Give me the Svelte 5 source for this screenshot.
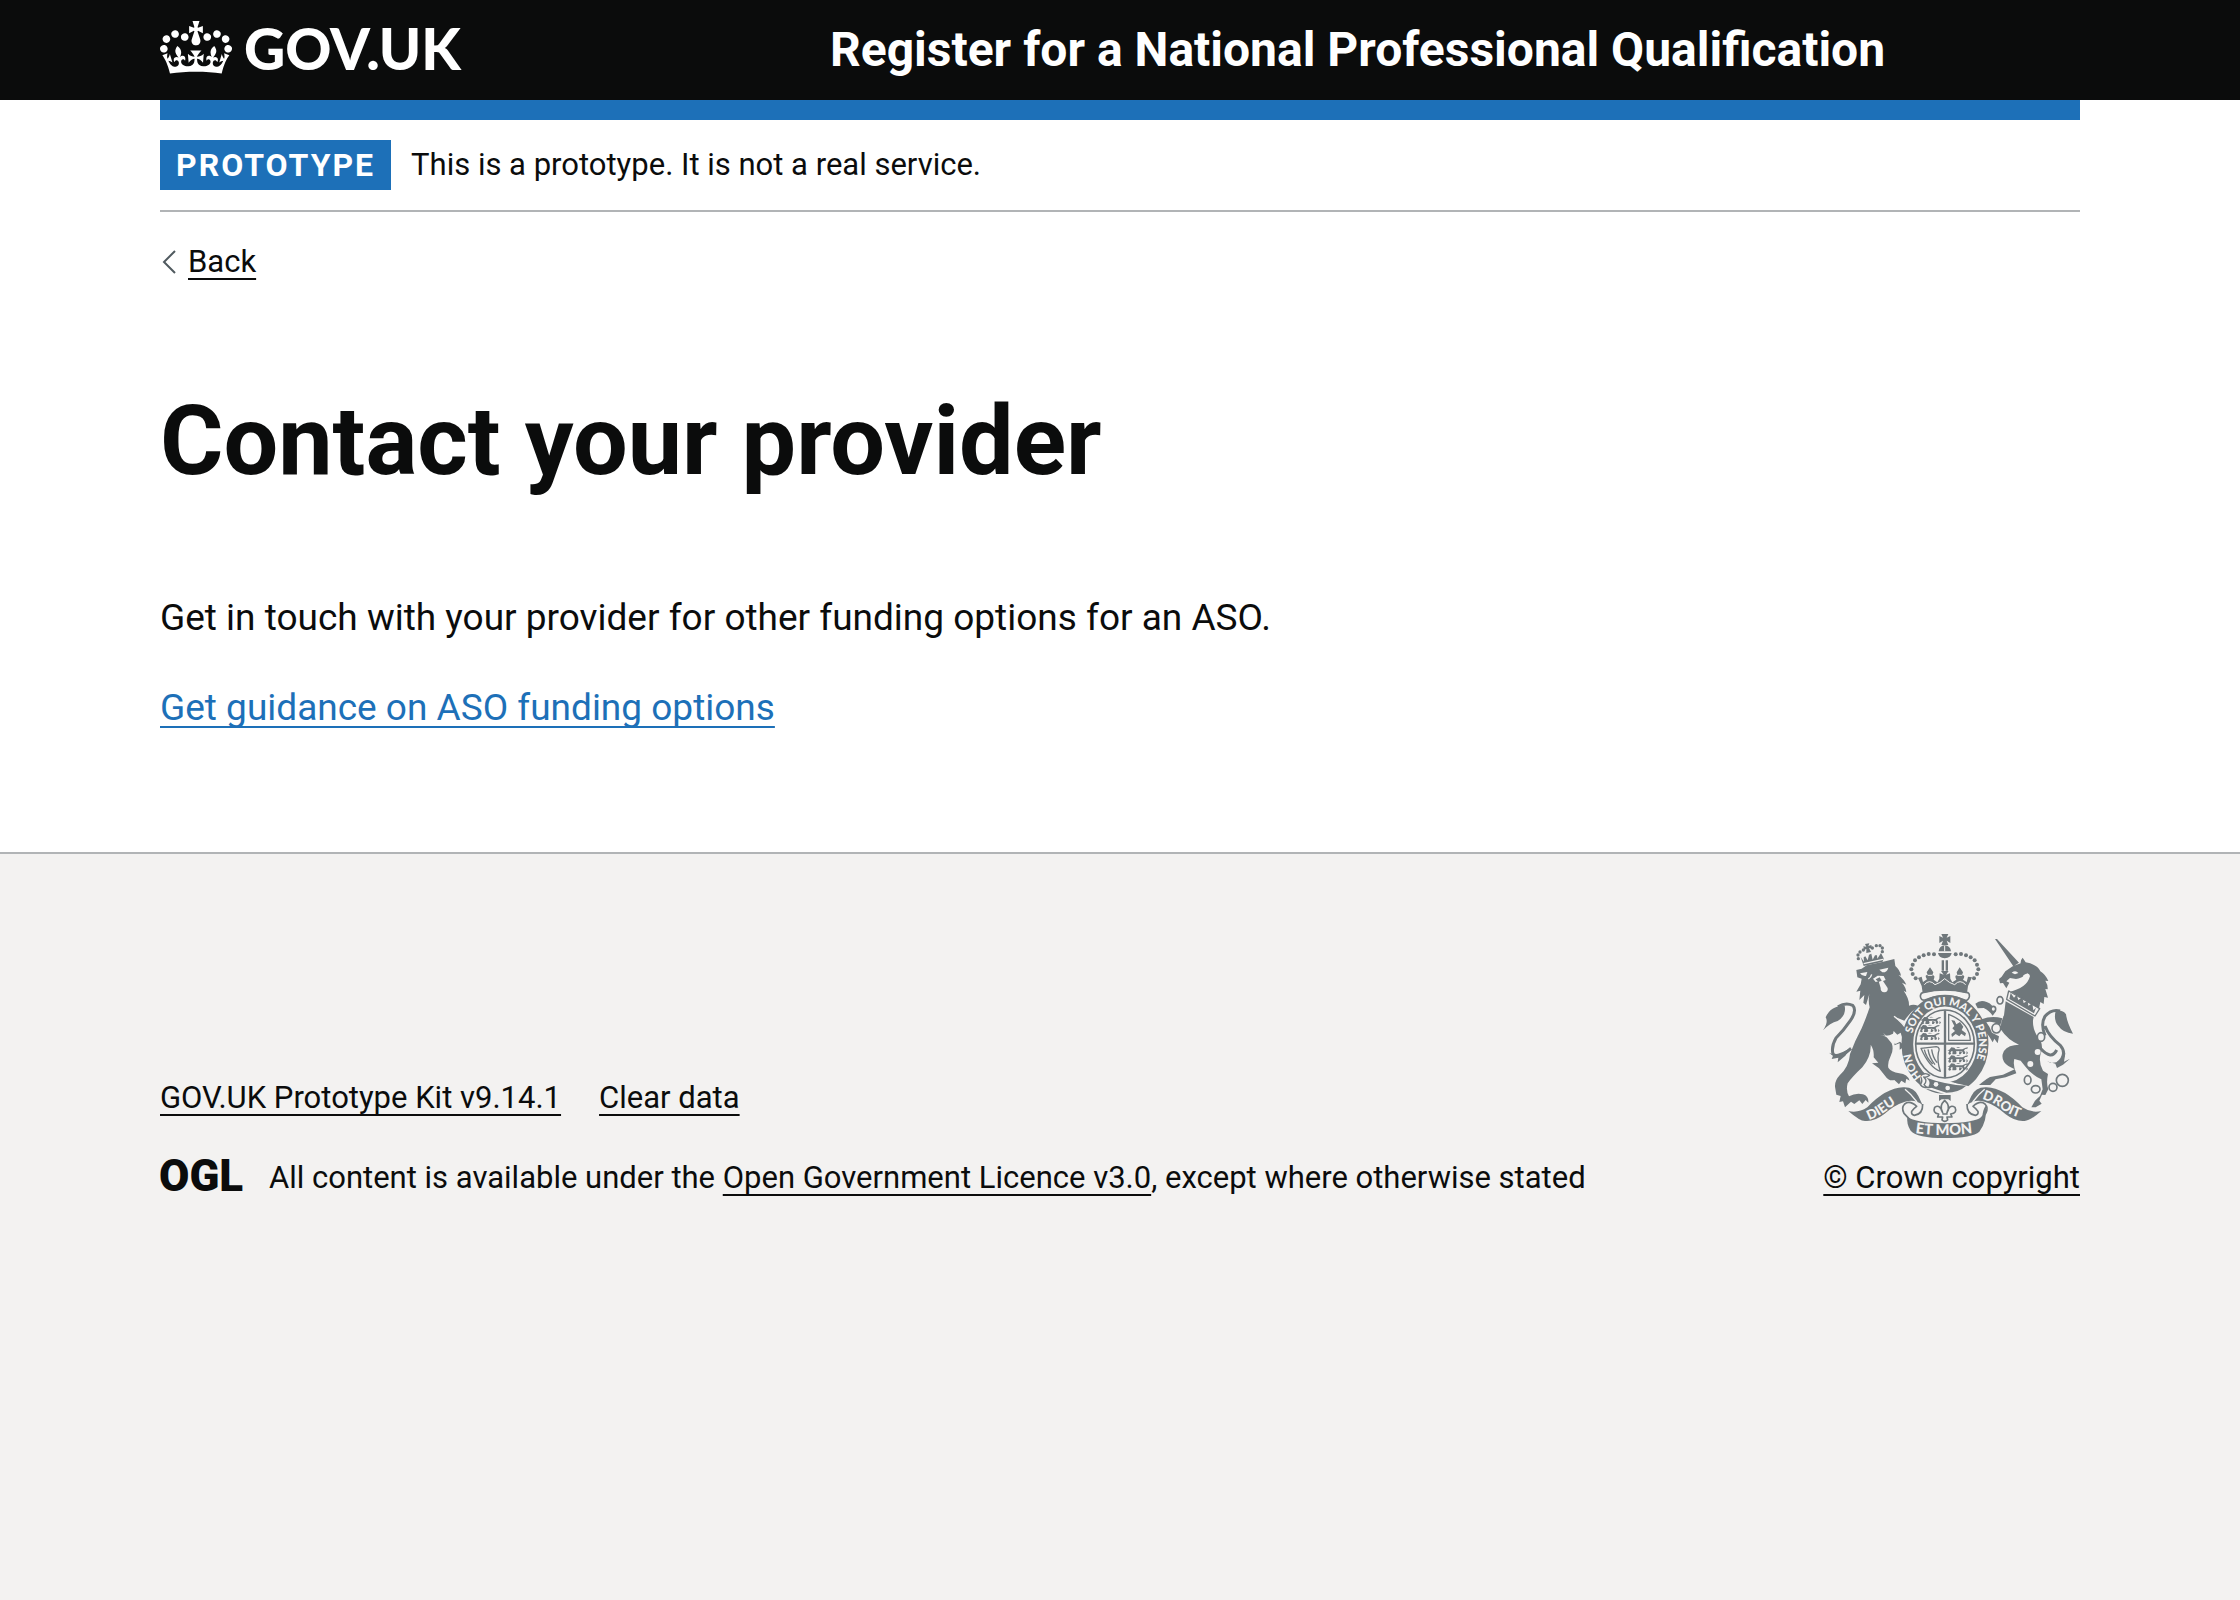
<script>
  const crownPearls = [
    [405, 103], [389, 102], [374, 106], [360, 112], [348, 121], [341, 134], [337, 148], [341, 162], [350, 175]
  ];
  const smallPearls = [
    [178, 116], [177, 105], [183, 96], [193, 90], [220, 84], [232, 77], [243, 77], [250, 84], [250, 95]
  ];
  const rings = [
    [603, 241, 9, 11], [583, 267, 7, 8], [592, 325, 13, 14], [726, 351, 11, 13], [686, 480, 10, 13],
    [710, 508, 13, 11], [762, 502, 12, 12], [790, 481, 18, 18]
  ];
  const passant = [
    [366, 290], [362, 314], [362, 338], [447, 381], [447, 405], [447, 429]
  ];
</script>

<header class="header">
  <div class="container header-row">
    <a class="logo" href="#home" aria-label="GOV.UK">
      <svg class="crown" viewBox="0 0 132 97" aria-hidden="true">
        <path fill="currentColor" fill-rule="evenodd" d="M25 30.2c3.5 1.5 7.7-.2 9.1-3.7 1.5-3.6-.2-7.8-3.9-9.2-3.6-1.4-7.6.3-9.1 3.9-1.4 3.5.3 7.5 3.9 9zM9 39.5c3.6 1.5 7.8-.2 9.2-3.7 1.5-3.6-.2-7.8-3.9-9.1-3.6-1.5-7.6.2-9.1 3.8-1.4 3.5.3 7.5 3.8 9zM4.4 57.2c3.5 1.5 7.7-.2 9.1-3.8 1.5-3.6-.2-7.7-3.9-9.1-3.5-1.5-7.6.3-9.1 3.8-1.4 3.5.3 7.6 3.9 9.1zm38.3-21.4c3.5 1.5 7.7-.2 9.1-3.8 1.5-3.6-.2-7.7-3.9-9.1-3.6-1.5-7.6.3-9.1 3.8-1.3 3.6.4 7.7 3.9 9.1zm64.4-5.6c-3.6 1.5-7.8-.2-9.1-3.7-1.5-3.6.2-7.8 3.8-9.2 3.6-1.4 7.7.3 9.2 3.9 1.3 3.5-.4 7.5-3.9 9zm15.9 9.3c-3.6 1.5-7.7-.2-9.1-3.7-1.5-3.6.2-7.8 3.7-9.1 3.6-1.5 7.7.2 9.2 3.8 1.5 3.5-.3 7.5-3.8 9zm4.7 17.7c-3.6 1.5-7.8-.2-9.2-3.8-1.5-3.6.2-7.7 3.9-9.1 3.6-1.5 7.7.3 9.2 3.8 1.3 3.5-.4 7.6-3.9 9.1zM89.3 35.8c-3.6 1.5-7.8-.2-9.2-3.8-1.4-3.6.2-7.7 3.9-9.1 3.6-1.5 7.7.3 9.2 3.8 1.4 3.6-.3 7.7-3.9 9.1zM69.7 17.7l8.9 4.7V9.3l-8.9 2.8c-.2-.3-.5-.6-.9-.9L72.4 0H59.6l3.5 11.2c-.3.3-.6.5-.9.9l-8.8-2.8v13.1l8.8-4.7c.3.3.6.7.9.9l-5 15.4v.1c-.2.8-.4 1.6-.4 2.4 0 4.1 3.1 7.5 7 8.1h.2c.3 0 .7.1 1 .1.4 0 .7 0 1-.1h.2c4-.6 7.1-4.1 7.1-8.1 0-.8-.1-1.7-.4-2.4V34l-5.1-15.4c.4-.2.7-.6 1-.9zM66 92.8c16.9 0 32.8 1.1 47.1 3.2 4-16.9 8.9-26.7 14-33.5l-9.6-3.4c1 4.9 1.1 7.2 0 10.2-1.5-1.4-3-4.3-4.2-8.7L108.6 76c2.8-2 5-3.2 7.5-3.3-4.4 9.4-10 11.9-13.6 11.2-4.3-.8-6.3-4.6-5.6-7.9 1-4.7 5.7-5.9 8-.5 4.3-8.7-3-11.4-7.6-8.8 7.1-7.2 7.9-13.5 2.1-21.1-8 6.1-8.1 12.3-4.5 20.8-4.7-5.4-12.1-2.5-9.5 6.2 3.4-5.2 7.9-2 7.2 3.1-.6 4.3-6.4 7.8-13.5 7.2-10.3-.9-10.9-8-11.2-13.8 2.5-.5 7.1 1.8 11 7.3L80.2 60c-4.1 4.4-8 5.3-12.3 5.4 1.4-4.4 8-11.6 8-11.6H55.5s6.4 7.2 7.9 11.6c-4.2-.1-8-1-12.3-5.4l1.4 16.4c3.9-5.5 8.5-7.7 10.9-7.3-.3 5.8-.9 12.8-11.1 13.8-7.2.6-12.9-2.9-13.5-7.2-.7-5 3.8-8.3 7.1-3.1 2.7-8.7-4.6-11.6-9.4-6.2 3.7-8.5 3.6-14.7-4.6-20.8-5.8 7.6-5 13.9 2.2 21.1-4.7-2.6-11.9.1-7.7 8.8 2.3-5.5 7.1-4.2 8.1.5.7 3.3-1.3 7.1-5.7 7.9-3.5.7-9-1.8-13.5-11.2 2.5.1 4.7 1.3 7.5 3.3l-4.7-15.4c-1.2 4.4-2.7 7.2-4.3 8.7-1.1-3-.9-5.3 0-10.2l-9.5 3.4c5 6.9 9.9 16.7 14 33.5 14.8-2.1 30.8-3.2 47.7-3.2z" />
      </svg>
      <span>GOV.UK</span>
    </a>
    <a class="service" href="#service">Register for a National Professional Qualification</a>
  </div>
</header>

<div class="container">
  <div class="bar"></div>
  <div class="phase">
    <strong class="tag">PROTOTYPE</strong>
    <span>This is a prototype. It is not a real service.</span>
  </div>
  <nav class="back-row" aria-label="Back">
    <svg class="chevron" viewBox="0 0 16 24" aria-hidden="true"><path d="M15 1 4 12l11 11" fill="none" stroke="#505a5f" stroke-width="2" /></svg>
    <a class="link" href="#back">Back</a>
  </nav>
  <main>
    <h1>Contact your provider</h1>
    <p>Get in touch with your provider for other funding options for an ASO.</p>
    <p><a class="link blue" href="#guidance">Get guidance on ASO funding options</a></p>
  </main>
</div>

<footer>
  <div class="container footer-row">
    <div class="footer-main">
      <nav class="footer-links" aria-label="Support links">
        <a class="link" href="#kit">GOV.UK Prototype Kit v9.14.1</a>
        <a class="link" href="#clear">Clear data</a>
      </nav>
      <div class="licence">
        <svg class="ogl" viewBox="0 0 82 40" role="img" aria-label="Open Government Licence">
          <text x="-1" y="33" class="ogl-text">OGL</text>
        </svg>
        <span>All content is available under the <a class="link" href="#licence">Open Government Licence v3.0</a>, except where otherwise stated</span>
      </div>
    </div>
    <div class="copyright">
      <svg class="arms" viewBox="72 42 750 612" aria-hidden="true">
        <defs>
          <path id="garter" d="M368 470A102 118 0 0 1 336 373A102 118 0 0 1 438 255A102 118 0 0 1 540 373A102 118 0 0 1 438 491" />
          <path id="dieu" d="M210 600Q240 590 268 568Q290 549 335 536" />
          <path id="droit" d="M549 537Q582 546 605 565Q635 590 700 603" />
          <path id="mon" d="M349 639Q437 652 540 636" />
          <g id="lion-passant">
            <path d="M4 8l6-7 9 1 4 5h20l10-5 7-1-2 4-6 1-4 4 4 7-2 4h-5l-1-7-8-2-12 1 2 6-3 3h-5l1-7-8-3-5 7-5-1 3-6-6-2zM14 13l8 3-4 6h-5zM34 12l8 4-4 6h-5z" />
            <path d="M6 16l-6 4 5 3 5-3M56 12l4 6-5 5M24 3l6-3 8 2" />
          </g>
          <g id="ribbon">
            <path d="M148 573Q178 580 205 562Q260 504 312 502Q345 500 358 528L371 556Q350 536 318 545Q285 555 255 583Q225 606 198 603Q182 603 148 573Z" />
            <path class="line" d="M371 552Q372 583 346 586Q336 584 338 574Q343 566 353 559Q332 540 317 552Q306 563 315 580L332 598" />
            <path class="cutline" d="M318 508Q336 522 354 546" />
          </g>
        </defs>
        <g class="ink">
          <!-- lion -->
          <path d="M172 150L188 146L203 136Q245 128 286 117L289 138Q303 150 306 167L299 165Q316 180 322 194L309 188Q321 202 322 217L314 212Q331 236 330 257Q344 251 358 258Q334 276 316 302L287 290Q324 318 337 350Q349 370 345 396L338 400L331 387L324 402L313 382L302 389L302 370L286 376L290 358L267 352L252 338L278 370Q285 388 275 408Q265 428 268 443Q276 456 301 460Q326 463 332 482L322 476L319 490L307 482L300 493L286 480Q270 485 258 467L240 445L219 430L238 428L224 412Q226 390 215 374Q217 410 190 442Q160 470 146 490Q140 512 150 529Q170 518 192 523Q210 529 208 548L200 540L190 552L181 541L166 552L156 545L138 562L132 544L121 546L125 528L112 524L108 500Q107 482 122 466Q150 440 153 402Q169 360 188 325Q202 292 212 262Q207 242 211 222L201 255L193 248L196 225L181 240L184 212L172 215L185 193L188 176L175 172Z" />
          <path d="M242 344Q264 352 282 341L284 333L295 344L305 338L309 352L319 350L320 366L332 368L320 380L303 365L290 372Q275 352 242 344Z" class="paper" />
          <path class="paper" d="M183 160L205 156L201 168Q190 170 183 160ZM241 149L268 143Q264 158 250 157ZM222 176L236 167L254 168L260 180L252 183L266 204Q268 216 256 217Q244 216 245 204L239 184L230 186Z" />
          <path d="M230 178L242 172L248 182L238 186Z" />
          <path class="cutline" d="M285 289Q312 309 326 334M208 177Q216 172 218 163" />
          <path class="line tail" d="M156 385Q120 418 102 402Q96 380 111 354Q135 330 154 302Q175 272 161 256Q140 246 117 260" />
          <path d="M72 331Q89 306 80 292Q95 256 137 257Q143 286 116 303Q93 309 72 331ZM90 398Q112 412 157 382L139 407L116 427L118 413L98 417L102 407Z" />
          <!-- lion's crown -->
          {#each smallPearls as [x, y]}<circle cx={x} cy={y} r="5" />{/each}
          <path d="M198 72L211 70L208 78L217 75L219 86L210 84L216 96L202 99L202 87L195 90L193 79L202 80ZM185 111L195 125L194 112L199 109L206 121L210 104L217 101L221 119L228 106L234 106L235 116L246 99L254 115L251 125L194 138Z" />
          <path class="cutline" d="M194 131L252 118" />
          <!-- imperial crown -->
          <path d="M427 42H448L443 53L454 48V69L443 62L448 75H427L432 62L421 69V48L432 53Z" />
          <path d="M419 94Q421 77 437 76Q454 77 456 94ZM417 99H458Q456 113 437 115Q419 113 417 99ZM428 121H435V152H428ZM440 121H447V152H440Z" />
          <path class="cutline thin" d="M437 77V94" />
          {#each crownPearls as [x, y]}
            <circle cx={x} cy={y} r="6" />
            <circle cx={875 - x} cy={y} r="6" />
          {/each}
          <path d="M357 174L368 170L372 186L384 178Q375 164 386 165L383 157L393 142L403 157L400 166Q410 165 404 179L415 187L421 176L422 160L434 164L426 153H449L441 164L453 160L454 176L460 187L472 179Q465 165 475 166L473 157L482 142L492 157L489 166Q501 165 492 179L503 186L507 170L519 172L507 198L504 219Q437 202 371 219L368 198Z" />
          <path class="cutline thin" d="M376 194Q391 176 408 194Q423 190 437 176Q452 190 467 194Q483 176 500 194M386 166H400M475 166H489" />
          <path class="line" d="M374 217Q437 203 501 217Q513 217 511 230Q507 244 497 240Q437 215 378 240Q365 242 364 228Q365 218 374 217Z" />
          <!-- garter and shield -->
          <ellipse class="band" cx="438" cy="373" rx="113" ry="131" />
          <ellipse class="line shield" cx="438" cy="372" rx="88" ry="102" />
          <path class="line cross" d="M438 271V474M350 371H526" />
          {#each passant as [x, y]}<use href="#lion-passant" x={x} y={y} />{/each}
          <path class="line thin" d="M449 283V361H514Q512 308 449 283Z" />
          <path d="M457 300L467 302L472 313L483 306L493 320L488 330L501 340L498 349L487 341L481 349L470 342L459 351L457 342L468 333L460 325L466 318Z" />
          <path class="line thin" d="M366 385L412 380Q425 382 418 398Q414 425 424 454Q391 443 366 385ZM376 389Q382 414 401 432M387 388Q391 413 408 434M398 388Q401 411 414 428" />
          <path class="paper" d="M362 470Q380 454 393 470L510 499Q485 521 443 524L389 508Q370 508 366 493Z" />
          <path d="M382 473Q440 494 502 497Q479 518 442 518L388 500Q398 486 382 473ZM465 488Q489 470 504 467L520 484Q500 496 465 488Z" />
          <path class="line thin" d="M364 468Q378 455 392 466Q383 474 374 471Q387 482 375 494Q385 508 399 500M364 468Q373 482 364 494Q372 506 389 502" />
          <circle class="paper" cx="411" cy="493" r="7" />
          <circle class="paper" cx="446" cy="504" r="7" />
          <!-- unicorn -->
          <path d="M588 57H594L660 128L643 139ZM641 139L665 130Q664 120 671 113L680 127Q715 133 724 154Q739 163 748 183L739 182Q747 195 746 208L739 207L747 233L736 231L734 252L724 246L720 266L630 212Q653 204 668 188Q686 174 686 160Q665 177 651 177L633 174L622 184L631 188L622 205L612 189L603 190L600 177L608 170L619 154Z" />
          <path class="paper" d="M638 158Q650 149 658 159L648 163ZM628 216Q684 205 693 168Q690 154 673 166Q675 188 642 199Z" />
          <path class="line thin paper" d="M629 213L623 238L708 288L722 266Z" />
          <path d="M631 237L635 219L645 233L653 224L658 240L670 232L674 249L686 242L688 257L700 250L703 271L711 263L705 280Z" />
          <path d="M620 244L704 291Q697 316 713 346Q738 372 724 405Q719 430 732 452L747 462Q741 490 748 508L739 525L729 524L721 542L728 551L710 562H697L708 542L723 528L731 508L727 478Q695 462 677 437L665 422L646 417Q641 437 652 460L620 472L590 478L574 495H540L548 488L563 477L573 471L612 464L647 448L628 438Q607 424 611 403Q617 380 646 376L660 374Q627 361 605 328Q604 306 615 286Z" />
          <path d="M529 251Q544 238 563 246Q581 252 590 275L581 287Q569 270 554 264L536 265ZM548 298Q578 286 610 295L604 315Q578 302 562 307Q573 321 579 338L600 349L596 370L586 356L581 367L571 350L550 322L538 319L544 306L534 309Z" />
          <path class="line tail" d="M724 385Q758 422 773 390M738 347Q724 311 738 289Q758 266 783 273M738 318Q750 350 784 376Q807 404 776 430" />
          <path d="M770 273Q790 268 801 283Q804 307 822 341Q792 338 778 318Q763 300 770 273ZM744 424Q776 440 799 400L795 425L813 416L792 434L774 444L769 431Z" />
          {#each rings as [x, y, rx, ry]}<ellipse class="line ring" cx={x} cy={y} rx={rx} ry={ry} />{/each}
          <circle class="paper" cx="716" cy="396" r="9" />
          <circle class="paper" cx="694" cy="432" r="9" />
          <!-- ribbons and fleur-de-lis -->
          <use href="#ribbon" />
          <use href="#ribbon" transform="matrix(-1 0 0 1 875 0)" />
          <path d="M325 591Q350 608 437 610Q525 608 550 591Q551 570 561 556Q565 605 541 635Q520 654 437 654Q354 654 335 632Q322 612 325 591Z" />
          <path d="M420 525H455V543L448 538H428L420 543Z" />
          <path class="line" d="M437 541Q419 558 431 578Q423 551 407 562Q400 579 419 582L416 591H431L429 600Q437 608 446 600L444 591H459L455 582Q476 579 468 562Q451 551 444 578Q456 558 437 541ZM430 582H446" />
        </g>
        <g class="motto">
          <text><textPath href="#garter" startOffset="0">HON</textPath></text>
          <text><textPath href="#garter" startOffset="137">SOIT QUI MAL Y PENSE</textPath></text>
          <text class="wide"><textPath href="#dieu">DIEU</textPath></text>
          <text class="large"><textPath href="#mon">ET MON</textPath></text>
          <text class="wide"><textPath href="#droit">DROIT</textPath></text>
        </g>
      </svg>
      <a class="link" href="#copyright">© Crown copyright</a>
    </div>
  </div>
</footer>

<style>
  :global(html) { background: #f3f2f1; }
  :global(body) { margin: 0; background: #fff; }
  .header { background: #0b0c0c; color: #fff; }
  .container {
    max-width: 1920px;
    margin: 0 auto;
    padding: 0 160px;
    font: 31px/40px Roboto, "Liberation Sans", sans-serif;
    color: #0b0c0c;
  }
  .header-row {
    display: grid;
    grid-template-columns: 1fr 2fr;
    column-gap: 45px;
    align-items: center;
    min-height: 100px;
    color: #fff;
  }
  .logo {
    display: flex;
    align-items: center;
    gap: 12px;
    padding-bottom: 5px;
    font: 900 57px/50px Lato, sans-serif;
    color: inherit;
    text-decoration: none;
  }
  .crown { width: 72px; height: 53px; }
  .service { font-weight: 700; font-size: 48px; line-height: 50px; color: inherit; text-decoration: none; }
  .bar { height: 20px; background: #1d70b8; }
  .phase {
    display: flex;
    align-items: center;
    gap: 20px;
    padding: 20px 0;
    border-bottom: 2px solid #b1b4b6;
  }
  .tag {
    padding: 5px 16px;
    background: #1d70b8;
    color: #fff;
    font-size: 32px;
    letter-spacing: 2px;
  }
  .back-row { display: flex; align-items: center; gap: 12px; margin-top: 30px; }
  .chevron { width: 16px; height: 24px; }
  .link {
    color: inherit;
    text-decoration: underline;
    text-decoration-thickness: 2px;
    text-underline-offset: 6px;
    text-decoration-skip-ink: none;
  }
  .blue { color: #1d70b8; }
  main { padding: 109px 0 119px; font-size: 37px; line-height: 50px; }
  h1 { margin: 0 0 102px; font-size: 97px; line-height: 100px; font-weight: 700; }
  p { margin: 0 0 40px; }
  p:last-child { margin: 0; }
  footer { padding: 80px 0; border-top: 2px solid #b1b4b6; background: #f3f2f1; }
  .footer-row { display: flex; align-items: flex-end; justify-content: space-between; gap: 40px; }
  .footer-main { display: flex; flex-direction: column; gap: 40px; }
  .footer-links { display: flex; flex-wrap: wrap; gap: 38px; }
  .licence { display: flex; gap: 27px; }
  .ogl { flex: none; width: 82px; height: 40px; overflow: visible; }
  .ogl-text { font: 900 44px Roboto, sans-serif; fill: #0b0c0c; }
  .copyright { display: flex; flex-direction: column; align-items: flex-start; gap: 20px; white-space: nowrap; }
  .arms { width: 250px; height: 204px; overflow: visible; }
  .ink { fill: #6f777b; stroke: none; }
  .paper { fill: #f3f2f1; }
  .line { fill: none; stroke: #6f777b; stroke-width: 5; stroke-linejoin: round; }
  .line.paper { fill: #f3f2f1; }
  .line.thin { stroke-width: 4; }
  .line.tail { stroke-width: 9; }
  .line.cross { stroke-width: 7; }
  .line.shield { fill: #f3f2f1; stroke-width: 5; }
  .line.ring { fill: #f3f2f1; }
  .cutline { fill: none; stroke: #f3f2f1; stroke-width: 4; }
  .cutline.thin { stroke-width: 3; }
  .band { fill: #f3f2f1; stroke: #6f777b; stroke-width: 35; }
  .motto { font: 900 33px Lato, sans-serif; fill: #f3f2f1; }
  .wide { font-size: 40px; }
  .large { font-size: 44px; }
</style>
